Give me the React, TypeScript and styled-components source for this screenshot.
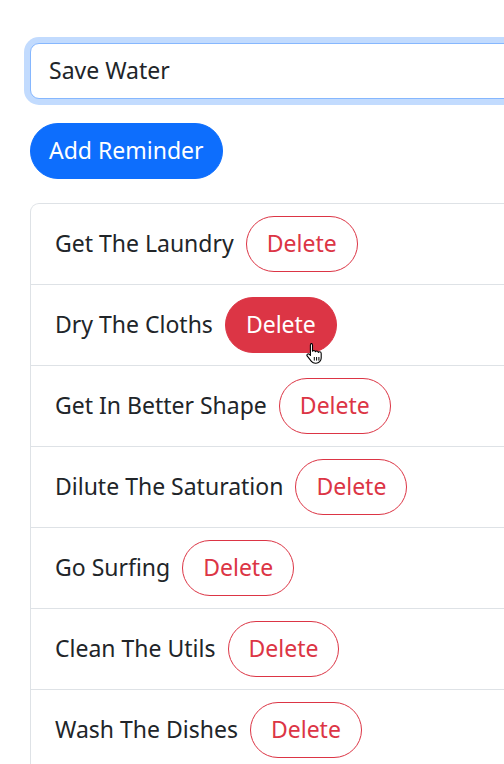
import React, { useState } from 'react';
import styled, { createGlobalStyle } from 'styled-components';

const GlobalStyle = createGlobalStyle`
  html, body {
    margin: 0;
    padding: 0;
    overflow: hidden;
    background: #ffffff;
  }
  body {
    font-family: "Noto Sans", "Open Sans", sans-serif;
    font-size: 23px;
    line-height: 36px;
    color: #212529;
  }
  * { box-sizing: border-box; }
`;

const Page = styled.div`
  width: 760px;
  padding: 43px 0 0 30px;
`;

const Input = styled.input`
  display: block;
  width: 100%;
  height: 56px;
  padding: 8px 18px 10px;
  font: inherit;
  color: #212529;
  background: #fff;
  border: 1px solid #86b7fe;
  border-radius: 9px;
  box-shadow: 0 0 0 6px rgba(13, 110, 253, 0.25);
  outline: none;
`;

const PrimaryButton = styled.button`
  display: inline-block;
  margin-top: 24px;
  padding: 8px 18px 10px;
  font: inherit;
  color: #fff;
  background: #0d6efd;
  border: 1px solid #0d6efd;
  border-radius: 50rem;
  cursor: pointer;
`;

const List = styled.ul`
  list-style: none;
  margin: 24px 0 0;
  padding: 0;
  border: 1px solid #dee2e6;
  border-bottom: 0;
  border-radius: 9px 9px 0 0;
`;

const Item = styled.li`
  display: flex;
  align-items: baseline;
  gap: 12px;
  padding: 12px 24px;
  border-bottom: 1px solid #dee2e6;
`;

const DeleteButton = styled.button<{ $hover?: boolean }>`
  position: relative;
  padding: 8px 20px 10px;
  font: inherit;
  color: ${p => (p.$hover ? '#fff' : '#dc3545')};
  background: ${p => (p.$hover ? '#dc3545' : 'transparent')};
  border: 1px solid #dc3545;
  border-radius: 50rem;
  cursor: pointer;
`;

const Pointer = styled.svg`
  position: absolute;
  left: 80px;
  top: 44px;
  width: 18px;
  height: 22px;
  pointer-events: none;
`;

const HandCursor = () => (
  <Pointer viewBox="0 0 18 22">
    <path
      d="M5 1.5c.8 0 1.5.7 1.5 1.5v6.2c.3-.5.8-.7 1.4-.7.8 0 1.4.6 1.5 1.3.3-.5.8-.8 1.4-.8.8 0 1.4.6 1.5 1.4.3-.4.8-.6 1.3-.6.9 0 1.6.7 1.6 1.6v4.6c0 2.9-2.3 5.2-5.2 5.2H9.4c-1.6 0-3-.7-4-1.9L1.3 14.2c-.5-.6-.4-1.5.2-2 .6-.5 1.5-.4 2 .2l.9 1.1V3c0-.8.7-1.5 1.5-1.5z"
      fill="#fff"
      stroke="#000"
      strokeWidth="1.1"
      strokeLinejoin="round"
    />
    <path d="M8.3 15v3.6M10.6 15v3.6M12.9 15v3.6" stroke="#000" strokeWidth="1" />
  </Pointer>
);

const initial = [
  'Get The Laundry',
  'Dry The Cloths',
  'Get In Better Shape',
  'Dilute The Saturation',
  'Go Surfing',
  'Clean The Utils',
  'Wash The Dishes',
];

export default function App() {
  const [text, setText] = useState('Save Water');
  const [items, setItems] = useState(initial);

  return (
    <Page>
      <GlobalStyle />
      <Input value={text} onChange={e => setText(e.target.value)} />
      <PrimaryButton onClick={() => text && setItems([...items, text])}>Add Reminder</PrimaryButton>
      <List>
        {items.map((name, i) => (
          <Item key={name + i}>
            <span>{name}</span>
            <DeleteButton $hover={i === 1} onClick={() => setItems(items.filter((_, j) => j !== i))}>
              Delete
              {i === 1 && <HandCursor />}
            </DeleteButton>
          </Item>
        ))}
      </List>
    </Page>
  );
}
